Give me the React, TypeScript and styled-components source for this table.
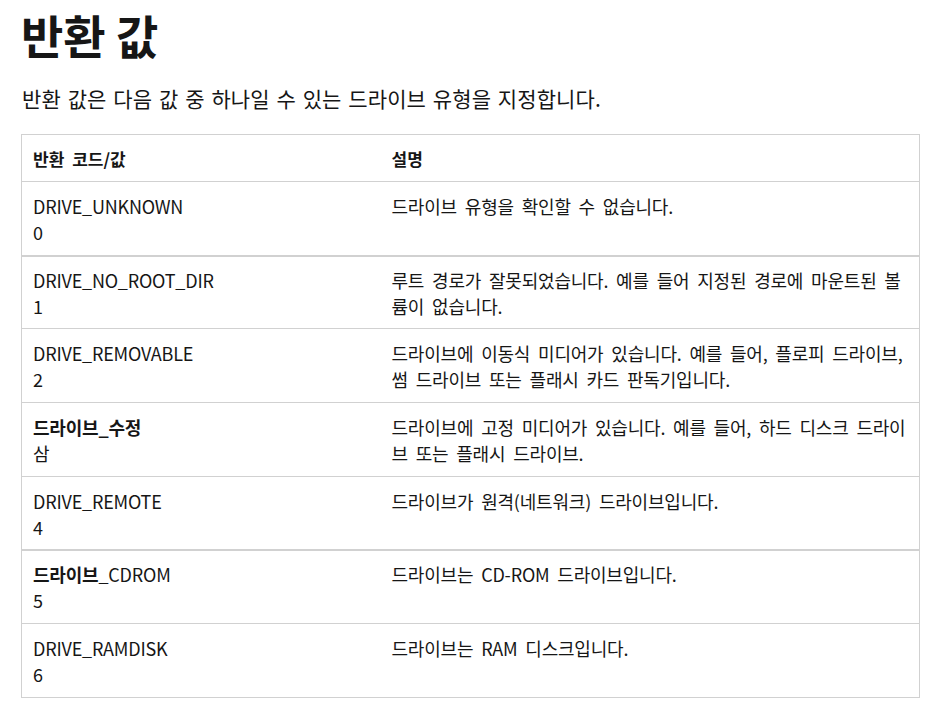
import React from "react";
import styled, { createGlobalStyle } from "styled-components";

interface Row {
  code: React.ReactNode;
  value: string;
  desc: string;
  bold?: boolean;
  thick?: boolean;
}

const rows: Row[] = [
  { code: "DRIVE_UNKNOWN", value: "0", desc: "드라이브 유형을 확인할 수 없습니다." },
  {
    code: "DRIVE_NO_ROOT_DIR",
    value: "1",
    desc: "루트 경로가 잘못되었습니다. 예를 들어 지정된 경로에 마운트된 볼륨이 없습니다.",
    thick: true
  },
  {
    code: "DRIVE_REMOVABLE",
    value: "2",
    desc: "드라이브에 이동식 미디어가 있습니다. 예를 들어, 플로피 드라이브, 썸 드라이브 또는 플래시 카드 판독기입니다."
  },
  {
    code: "드라이브_수정",
    value: "삼",
    desc: "드라이브에 고정 미디어가 있습니다. 예를 들어, 하드 디스크 드라이브 또는 플래시 드라이브.",
    bold: true
  },
  { code: "DRIVE_REMOTE", value: "4", desc: "드라이브가 원격(네트워크) 드라이브입니다." },
  {
    code: (
      <>
        <b>드라이브</b>_CDROM
      </>
    ),
    value: "5",
    desc: "드라이브는 CD-ROM 드라이브입니다.",
    thick: true
  },
  { code: "DRIVE_RAMDISK", value: "6", desc: "드라이브는 RAM 디스크입니다." }
];

const GlobalStyle = createGlobalStyle`
  body {
    margin: 0;
    background: #ffffff;
    color: #161616;
    font-family: "Noto Sans CJK KR", "Noto Sans", sans-serif;
  }
`;

const Page = styled.main`
  padding: 6px 32px 24px 21px;
`;

const Title = styled.h1`
  margin: 0;
  font-size: 46px;
  font-weight: 700;
  line-height: 56px;
`;

const Intro = styled.p`
  margin: 21px 0 21px 1px;
  font-size: 21px;
  line-height: 30px;
  font-weight: 400;
  letter-spacing: 0.1px;
  word-spacing: 2px;
`;

const Table = styled.table`
  width: 899px;
  border-collapse: collapse;
  border: 1px solid #d1d1d1;
  font-size: 18px;
  line-height: 26px;
  letter-spacing: -0.2px;
  word-spacing: 4px;
  table-layout: fixed;
`;

const HeadCell = styled.th`
  text-align: left;
  font-weight: 700;
  font-size: 17px;
  letter-spacing: 0;
  padding: 11px 11px 9px;
  border-bottom: 1px solid #d1d1d1;
`;

const BodyRow = styled.tr<{ $thick?: boolean }>`
  border-top: ${p => (p.$thick ? "2px" : "1px")} solid #d1d1d1;
`;

const Cell = styled.td<{ $thick?: boolean }>`
  vertical-align: top;
  padding: ${p => (p.$thick ? "10px" : "11px")} 11px 9.7px;
`;

const Code = styled.div<{ $bold?: boolean }>`
  font-weight: ${p => (p.$bold ? 700 : 400)};
  b {
    font-weight: 700;
  }
`;

export default function App() {
  return (
    <>
      <GlobalStyle />
      <Page>
        <Title>반환 값</Title>
        <Intro>반환 값은 다음 값 중 하나일 수 있는 드라이브 유형을 지정합니다.</Intro>
        <Table>
          <colgroup>
            <col style={{ width: "359px" }} />
            <col />
          </colgroup>
          <thead>
            <tr>
              <HeadCell>반환 코드/값</HeadCell>
              <HeadCell>설명</HeadCell>
            </tr>
          </thead>
          <tbody>
            {rows.map((row, i) => (
              <BodyRow key={i} $thick={row.thick}>
                <Cell $thick={row.thick}>
                  <Code $bold={row.bold}>{row.code}</Code>
                  <div>{row.value}</div>
                </Cell>
                <Cell $thick={row.thick}>{row.desc}</Cell>
              </BodyRow>
            ))}
          </tbody>
        </Table>
      </Page>
    </>
  );
}
